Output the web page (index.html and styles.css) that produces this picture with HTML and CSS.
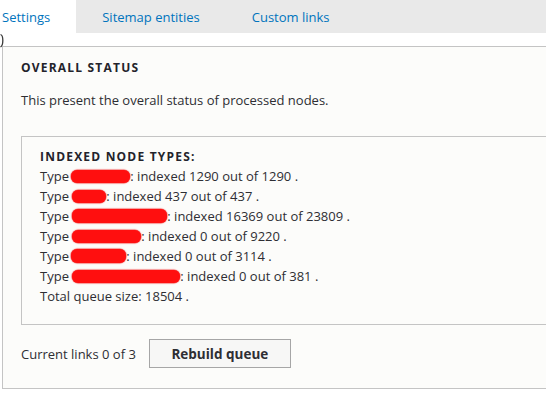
FILE: index.html
```html
<!DOCTYPE html>
<html>
<head>
<meta charset="utf-8">
<link rel="stylesheet" href="styles.css">
</head>
<body>
<nav class="tabs">
  <a class="tab active">Settings</a>
  <a class="tab">Sitemap entities</a>
  <a class="tab">Custom links</a>
</nav>
<svg class="curl" width="5" height="16" viewBox="0 0 5 16"><path d="M0.5 1.5 C3.6 2.5 3.6 12 0.5 14" fill="none" stroke="#3a3a3a" stroke-width="1.3"/></svg>
<section class="fieldset outer">
  <h2 class="legend">Overall status</h2>
  <p class="desc">This present the overall status of processed nodes.</p>
  <div class="fieldset inner">
    <h3 class="legend sub">Indexed node types:</h3>
    <div class="line">Type <span class="redact r1"></span>: indexed 1290 out of 1290 .</div>
    <div class="line">Type <span class="redact r2"></span>: indexed 437 out of 437 .</div>
    <div class="line">Type <span class="redact r3"></span>: indexed 16369 out of 23809 .</div>
    <div class="line">Type <span class="redact r4"></span>: indexed 0 out of 9220 .</div>
    <div class="line">Type <span class="redact r5"></span>: indexed 0 out of 3114 .</div>
    <div class="line">Type <span class="redact r6"></span>: indexed 0 out of 381 .</div>
    <div class="line">Total queue size: 18504 .</div>
  </div>
  <div class="actions">
    <span class="count">Current links 0 of 3</span>
    <button class="btn">Rebuild queue</button>
  </div>
</section>
</body>
</html>
```
FILE: styles.css
```css
html, body {
  margin: 0;
  padding: 0;
  background: #ffffff;
  overflow: hidden;
}
body {
  font-family: "Open Sans", "Noto Sans", sans-serif;
  font-size: 13px;
  line-height: 20px;
  color: #2e2e33;
  position: relative;
  width: 546px;
  height: 397px;
}
.tabs {
  display: flex;
  height: 33px;
  background: #e9e9e9;
}
.tab {
  display: block;
  padding: 7px 26px 6px;
  color: #0074bd;
  white-space: nowrap;
  cursor: pointer;
}
.tab.active {
  background: #ffffff;
  margin-left: -24px;
}
.curl {
  position: absolute;
  left: 0;
  top: 33px;
}
.fieldset {
  border: 1px solid #c4c4c4;
  background: #fcfcfa;
}
.outer {
  margin: 13px 0 0 2px;
  width: 600px;
  padding: 13px 18px 20px;
}
.legend {
  margin: 0;
  font-size: 12px;
  line-height: 16px;
  font-weight: 700;
  text-transform: uppercase;
  letter-spacing: 0.1em;
  color: #23232b;
}
.desc {
  margin: 14px 0 0;
}
.inner {
  margin-top: 26px;
  padding: 11px 18px 18px;
}
.sub {
  line-height: 18px;
}
.line {
  white-space: nowrap;
}
.redact {
  display: inline-block;
  height: 13px;
  vertical-align: -2px;
  background: #ff0f0f;
  border-radius: 6px;
  box-shadow: 0 0 1px 0.5px #f24848;
}
.r1 { width: 59px; margin-left: -1px; }
.r2 { width: 34px; }
.r3 { width: 95px; height: 14px; }
.r4 { width: 69px; }
.r5 { width: 55px; height: 14px; margin-left: -1px; }
.r6 { width: 108px; }
.actions {
  display: flex;
  align-items: center;
  gap: 13px;
  margin-top: 14px;
}
.btn {
  font-family: "Open Sans", "Noto Sans", sans-serif;
  font-size: 13.5px;
  line-height: 20px;
  font-weight: 700;
  color: #2e2e33;
  background: #f7f7f6;
  border: 1px solid #a6a6a6;
  border-radius: 0;
  width: 142px;
  height: 29px;
  padding: 0;
}
```
